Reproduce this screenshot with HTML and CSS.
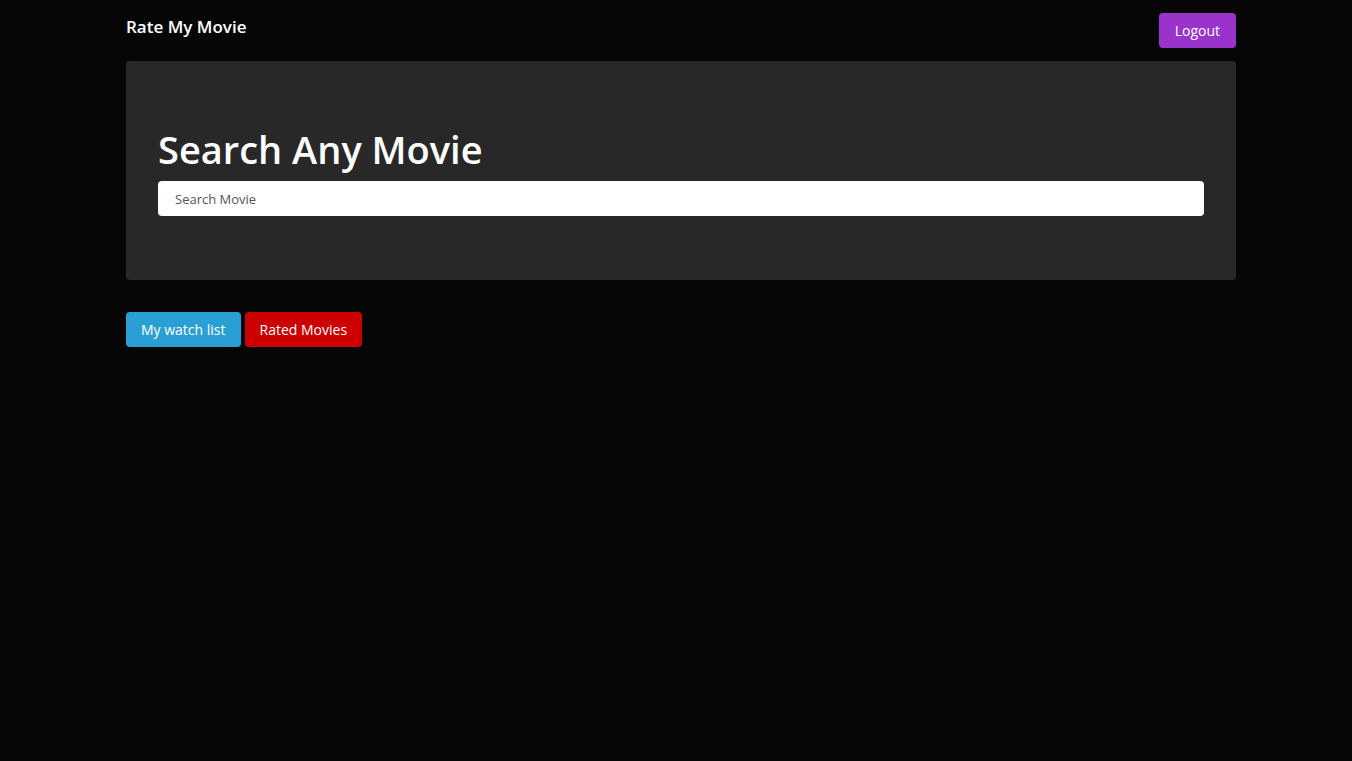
FILE: index.html
```html
<!DOCTYPE html>
<html>
<head>
<meta charset="utf-8">
<link rel="stylesheet" href="styles.css">
</head>
<body>
<div class="container">
  <nav class="navbar">
    <span class="brand">Rate My Movie</span>
    <button class="btn btn-info">Logout</button>
  </nav>
  <div class="jumbotron">
    <h1 class="title">Search Any Movie</h1>
    <input class="search" type="text" placeholder="Search Movie">
  </div>
  <div class="actions">
    <button class="btn btn-primary">My watch list</button>
    <button class="btn btn-danger">Rated Movies</button>
  </div>
</div>
</body>
</html>
```

FILE: styles.css
```css
* { box-sizing: border-box; }
body {
  margin: 0;
  background: #060606;
  color: #fff;
  font-family: "Open Sans", "Noto Sans", sans-serif;
  font-size: 14px;
}
.container {
  width: 1110px;
  margin: 0 0 0 126px;
}
.navbar {
  display: flex;
  justify-content: space-between;
  align-items: flex-start;
  height: 61px;
  padding-top: 13px;
}
.brand {
  font-size: 17px;
  font-weight: 600;
  line-height: 28px;
}
.btn {
  border: 0;
  border-radius: 4px;
  color: #fff;
  font-family: inherit;
  font-size: 14px;
  line-height: 21px;
  padding: 7px 15px;
  cursor: pointer;
}
.btn-info { background: #9933cc; padding: 7px 16px; }
.btn-primary { background: #2a9fd6; }
.btn-danger { background: #cc0000; }
.jumbotron {
  background: #282828;
  border-radius: 4px;
  padding: 64px 32px;
  display: flex;
  flex-direction: column;
}
.title {
  margin: 0 0 8px;
  font-size: 38px;
  font-weight: 600;
  line-height: 48px;
}
.search {
  height: 35px;
  border: 0;
  border-radius: 4px;
  background: #fff;
  padding: 0 17px;
  font-family: inherit;
  font-size: 13px;
  color: #333;
}
.search::placeholder { color: #555; }
.actions {
  display: flex;
  gap: 4px;
  margin-top: 32px;
}
```
